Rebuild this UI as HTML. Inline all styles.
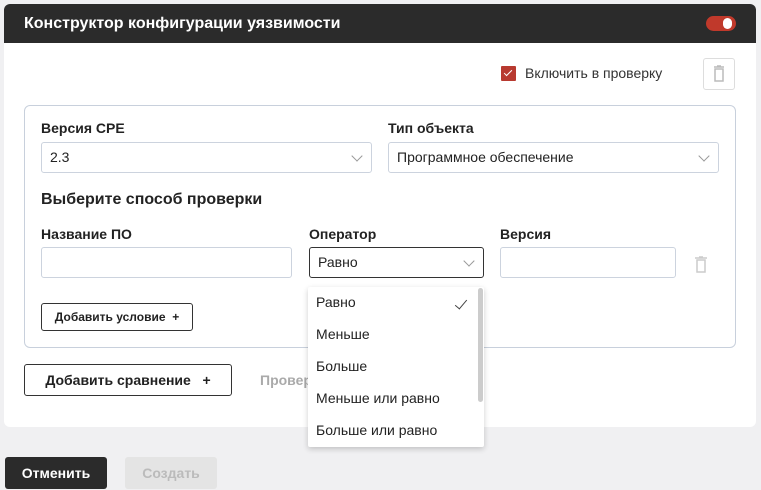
<!DOCTYPE html>
<html><head><meta charset="utf-8"><style>
*{box-sizing:border-box;margin:0;padding:0}
body{width:761px;height:490px;background:#f0f0f2;font-family:"Liberation Sans",sans-serif;color:#222;position:relative;overflow:hidden}
.a{position:absolute}
.card{left:4px;top:4px;width:752px;height:423px;background:#fff;border-radius:6px;overflow:hidden}
.hdr{left:0;top:0;width:752px;height:39px;background:#2b2b2b;color:#fff;font-weight:bold;font-size:16px;line-height:39px;padding-left:20px}
.lbl{font-size:14px;font-weight:bold;color:#222}
.sel{border:1px solid #ccd3de;border-radius:3px;height:31px;font-size:14px;line-height:29px;padding-left:8px;background:#fff}
.chev{position:absolute;right:10px;top:9px;width:8px;height:8px;border-right:1px solid #999;border-bottom:1px solid #999;transform:rotate(45deg)}
.btn{border:1px solid #333;border-radius:3px;font-weight:bold;background:#fff;text-align:center}
.it{position:absolute;left:8px;font-size:14px;color:#222}
</style></head><body>
<div class="a card">
 <div class="a hdr">Конструктор конфигурации уязвимости</div>
 <div class="a" style="left:702px;top:12px;width:30px;height:15px;border-radius:8px;background:#c0392b"></div>
 <div class="a" style="left:719px;top:14px;width:9px;height:11px;border-radius:5px;background:#fff"></div>
</div>
<div class="a" style="left:501px;top:66px;width:15px;height:15px;background:#b83a30;border-radius:1px"></div>
<div class="a" style="left:506px;top:68px;width:4px;height:8px;border-right:1px solid #fff;border-bottom:1px solid #fff;transform:rotate(45deg)"></div>
<div class="a" style="left:525px;top:65px;font-size:14px;color:#333">Включить в проверку</div>
<div class="a" style="left:703px;top:58px;width:32px;height:32px;border:1px solid #ddd;border-radius:3px"></div>
<svg class="a" style="left:711px;top:65px" width="16" height="18" viewBox="0 0 16 18"><path d="M3 2h10M6 1h4M4 4h8v12H4z" stroke="#bbb" stroke-width="1.5" fill="none"/></svg>
<div class="a" style="left:24px;top:105px;width:712px;height:243px;border:1px solid #c8d0dc;border-radius:6px"></div>
<div class="a lbl" style="left:41px;top:120px">Версия CPE</div>
<div class="a lbl" style="left:388px;top:120px">Тип объекта</div>
<div class="a sel" style="left:41px;top:142px;width:331px">2.3<span class="chev"></span></div>
<div class="a sel" style="left:388px;top:142px;width:331px">Программное обеспечение<span class="chev"></span></div>
<div class="a" style="left:41px;top:191px;font-size:16px;font-weight:bold;color:#222">Выберите способ проверки</div>
<div class="a lbl" style="left:41px;top:226px">Название ПО</div>
<div class="a lbl" style="left:309px;top:226px">Оператор</div>
<div class="a lbl" style="left:500px;top:226px">Версия</div>
<div class="a sel" style="left:41px;top:247px;width:251px"></div>
<div class="a sel" style="left:309px;top:247px;width:175px;border-color:#333">Равно<span class="chev"></span></div>
<div class="a sel" style="left:500px;top:247px;width:176px"></div>
<svg class="a" style="left:693px;top:256px" width="16" height="18" viewBox="0 0 16 18"><path d="M2 2h12M6 1h4M4 4h8v12H4z" stroke="#ccc" stroke-width="1.5" fill="none"/></svg>
<div class="a btn" style="left:41px;top:303px;width:152px;height:28px;font-size:12px;line-height:26px">Добавить условие &nbsp;+</div>
<div class="a btn" style="left:24px;top:364px;width:208px;height:32px;font-size:14px;line-height:30px">Добавить сравнение &nbsp;&nbsp;+</div>
<div class="a" style="left:260px;top:372px;font-size:14px;font-weight:bold;color:#aaa">Провер</div>
<div class="a" style="left:308px;top:287px;width:176px;height:160px;background:#fff;box-shadow:0 2px 6px rgba(0,0,0,.2);border-radius:2px">
 <div class="it" style="top:7px">Равно</div>
 <div class="a" style="left:150px;top:10px;width:6px;height:12px;border-right:1px solid #444;border-bottom:1px solid #444;transform:rotate(40deg)"></div>
 <div class="it" style="top:39px">Меньше</div>
 <div class="it" style="top:71px">Больше</div>
 <div class="it" style="top:103px">Меньше или равно</div>
 <div class="it" style="top:135px">Больше или равно</div>
 <div class="a" style="left:170px;top:1px;width:5px;height:114px;background:#ccc;border-radius:3px"></div>
</div>
<div class="a" style="left:5px;top:457px;width:102px;height:32px;background:#2b2b2b;border-radius:3px;color:#fff;font-weight:bold;font-size:14px;line-height:32px;text-align:center">Отменить</div>
<div class="a" style="left:125px;top:457px;width:92px;height:32px;background:#e4e4e4;border-radius:3px;color:#bbb;font-weight:bold;font-size:14px;line-height:32px;text-align:center">Создать</div>
</body></html>
